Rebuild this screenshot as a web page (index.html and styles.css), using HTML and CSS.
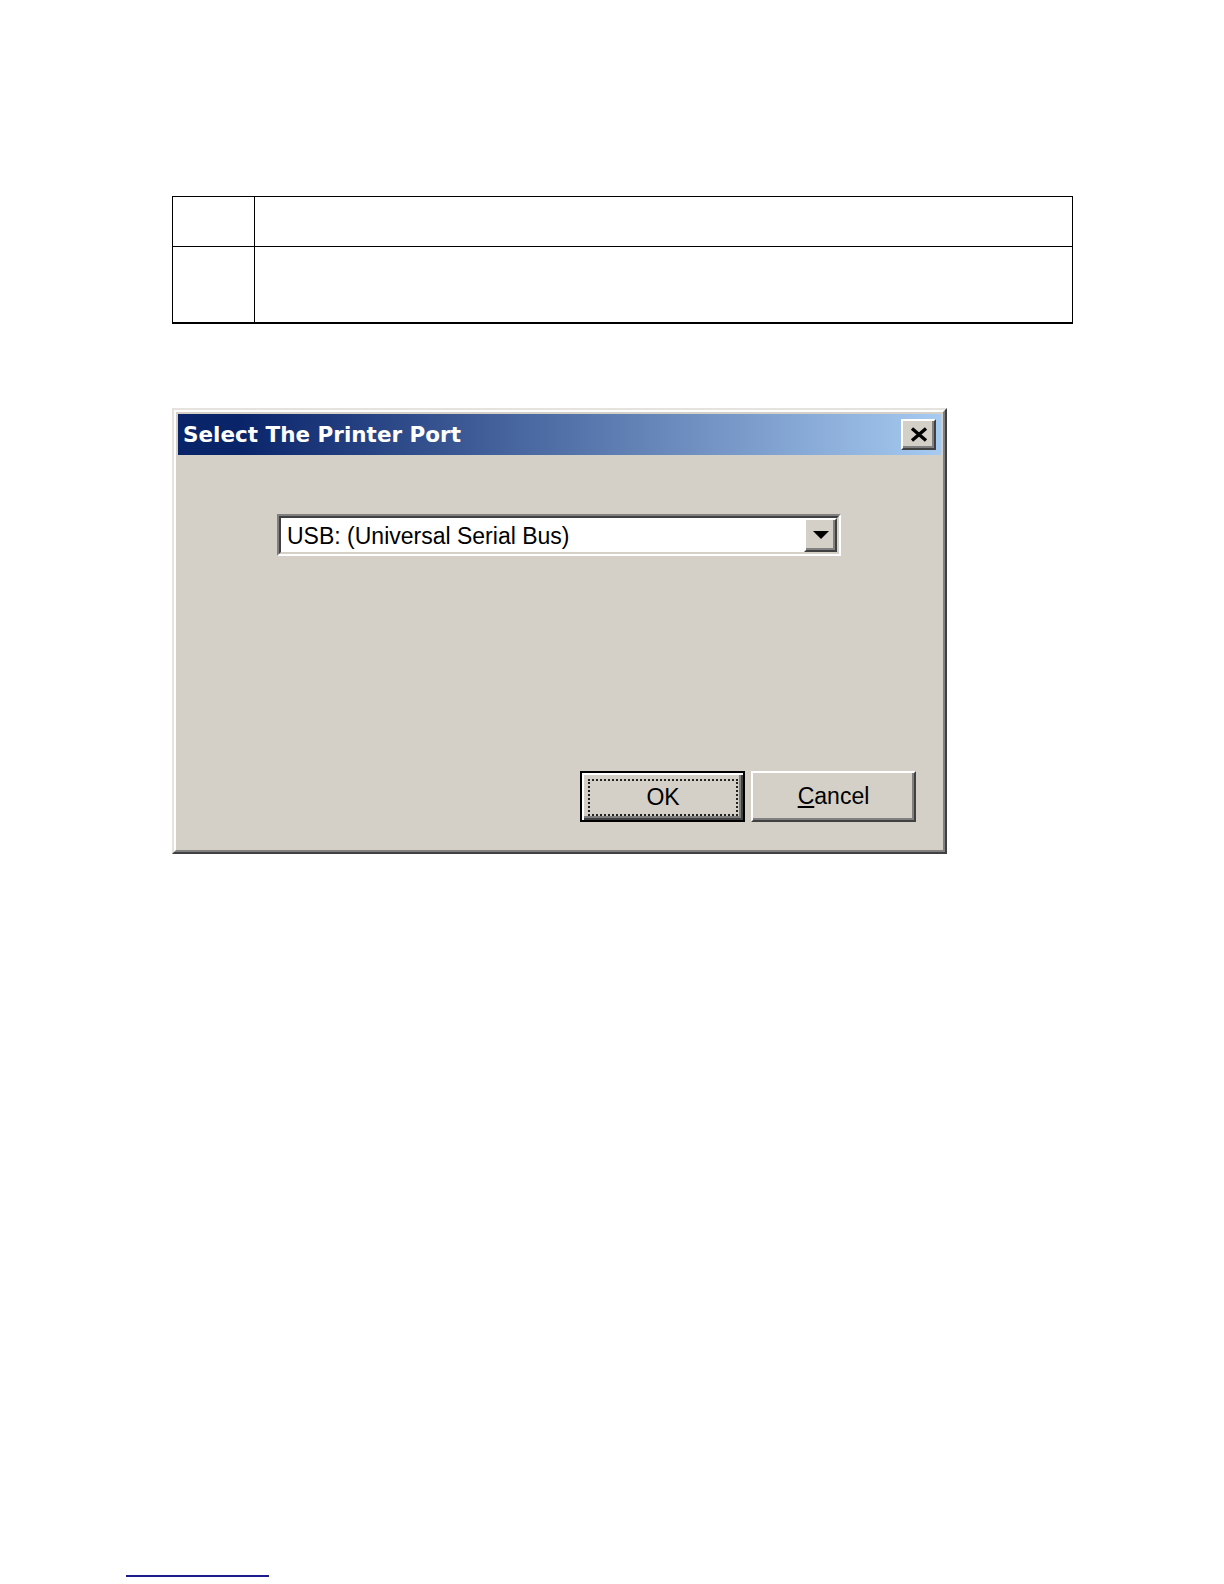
FILE: index.html
```html
<!DOCTYPE html>
<html>
<head>
    <meta charset="UTF-8">
    <title>Select The Printer Port</title>
    <link rel="stylesheet" href="styles.css">
</head>
<body>
<div class="sheet">
    <!--empty table-->
    <table class="spec-table">
        <tr class="row-short">
            <td class="num-cell"></td>
            <td></td>
        </tr>
        <tr class="row-tall">
            <td class="num-cell"></td>
            <td></td>
        </tr>
    </table>

    <!--dialog-->
    <div class="win">
        <div class="win-inner">
            <div class="caption">
                <span class="caption-text">Select The Printer Port</span>
                <div class="caption-btn">
                    <svg width="18" height="15" viewBox="0 0 18 15">
                        <path d="M2 1.5 L16 13.5 M16 1.5 L2 13.5" stroke="#000" stroke-width="3.4" fill="none"/>
                    </svg>
                </div>
            </div>
            <div class="win-body">
                <div class="combo">
                    <div class="combo-in">
                        <div class="combo-field">USB: (Universal Serial Bus)</div>
                        <div class="combo-btn">
                            <svg width="16" height="8" viewBox="0 0 16 8">
                                <path d="M0 0 L16 0 L8 8 Z" fill="#000"/>
                            </svg>
                        </div>
                    </div>
                </div>
                <div class="btn-row">
                    <div class="btn btn-default"><span class="focus">OK</span></div>
                    <div class="btn"><u>C</u>ancel</div>
                </div>
            </div>
        </div>
    </div>

    <div class="foot-rule"></div>
</div>
</body>
</html>
```

FILE: styles.css
```css
* {
    margin: 0;
    padding: 0;
}
body {
    background-color: #fff;
    font-family: "Liberation Sans", Arial, sans-serif;
}
.sheet {
    padding-top: 196px;
}
.spec-table {
    margin-left: 172px;
    width: 901px;
    border-collapse: collapse;
}
.spec-table td {
    border: 1px solid #000;
}
.spec-table .num-cell {
    width: 81px;
}
.row-short {
    height: 50px;
}
.row-tall {
    height: 76px;
}
.row-tall td {
    border-bottom-width: 2px;
}

/* window frame */
.win {
    width: 775px;
    box-sizing: border-box;
    margin: 84px 0 0 172px;
    border: 2px solid;
    border-color: #e6e3de #404040 #404040 #e6e3de;
    background-color: #d4d0c8;
}
.win-inner {
    border: 2px solid;
    border-color: #fff #808080 #808080 #fff;
    padding: 2px;
}
.caption {
    height: 41px;
    padding: 0 5px;
    display: flex;
    align-items: center;
    justify-content: space-between;
    background: linear-gradient(90deg, #0a246a 8%, #a6caf0);
}
.caption-text {
    font-family: "DejaVu Sans", sans-serif;
    font-weight: bold;
    font-size: 21.5px;
    color: #fff;
}
.caption-btn {
    width: 35px;
    height: 31px;
    box-sizing: border-box;
    border: 2px solid;
    border-color: #fff #404040 #404040 #fff;
    box-shadow: inset -2px -2px 0 #808080;
    background-color: #d4d0c8;
    display: flex;
    align-items: center;
    justify-content: center;
}
.win-body {
    padding: 59px 25px 26px 99px;
    display: flex;
    flex-direction: column;
}

/* combo box */
.combo {
    width: 564px;
    height: 42px;
    box-sizing: border-box;
    border: 2px solid;
    border-color: #808080 #fff #fff #808080;
}
.combo-in {
    height: 100%;
    box-sizing: border-box;
    border: 2px solid;
    border-color: #404040 #d4d0c8 #d4d0c8 #404040;
    background-color: #fff;
    display: flex;
}
.combo-field {
    flex: 1;
    padding-left: 6px;
    font-size: 23px;
    line-height: 36px;
    color: #000;
}
.combo-btn {
    width: 33px;
    box-sizing: border-box;
    border: 2px solid;
    border-color: #fff #404040 #404040 #fff;
    box-shadow: inset -2px -2px 0 #808080;
    background-color: #d4d0c8;
    display: flex;
    align-items: center;
    justify-content: center;
}

/* buttons */
.btn-row {
    margin-top: 215px;
    display: flex;
    justify-content: flex-end;
    gap: 6px;
}
.btn {
    width: 165px;
    height: 51px;
    box-sizing: border-box;
    border: 2px solid;
    border-color: #fff #404040 #404040 #fff;
    box-shadow: inset -2px -2px 0 #808080;
    display: flex;
    align-items: center;
    justify-content: center;
    font-size: 23px;
    color: #000;
}
.btn-default {
    border-color: #000;
    box-shadow: inset 2px 2px 0 #fff, inset -2px -2px 0 #404040, inset -4px -4px 0 #808080;
    padding: 6px 5px 4px 6px;
    align-items: stretch;
}
.focus {
    flex: 1;
    border: 2px dotted #222;
    display: flex;
    align-items: center;
    justify-content: center;
}
.foot-rule {
    width: 143px;
    height: 2px;
    margin: 721px 0 0 126px;
    background-color: #1c1c8c;
}
```
